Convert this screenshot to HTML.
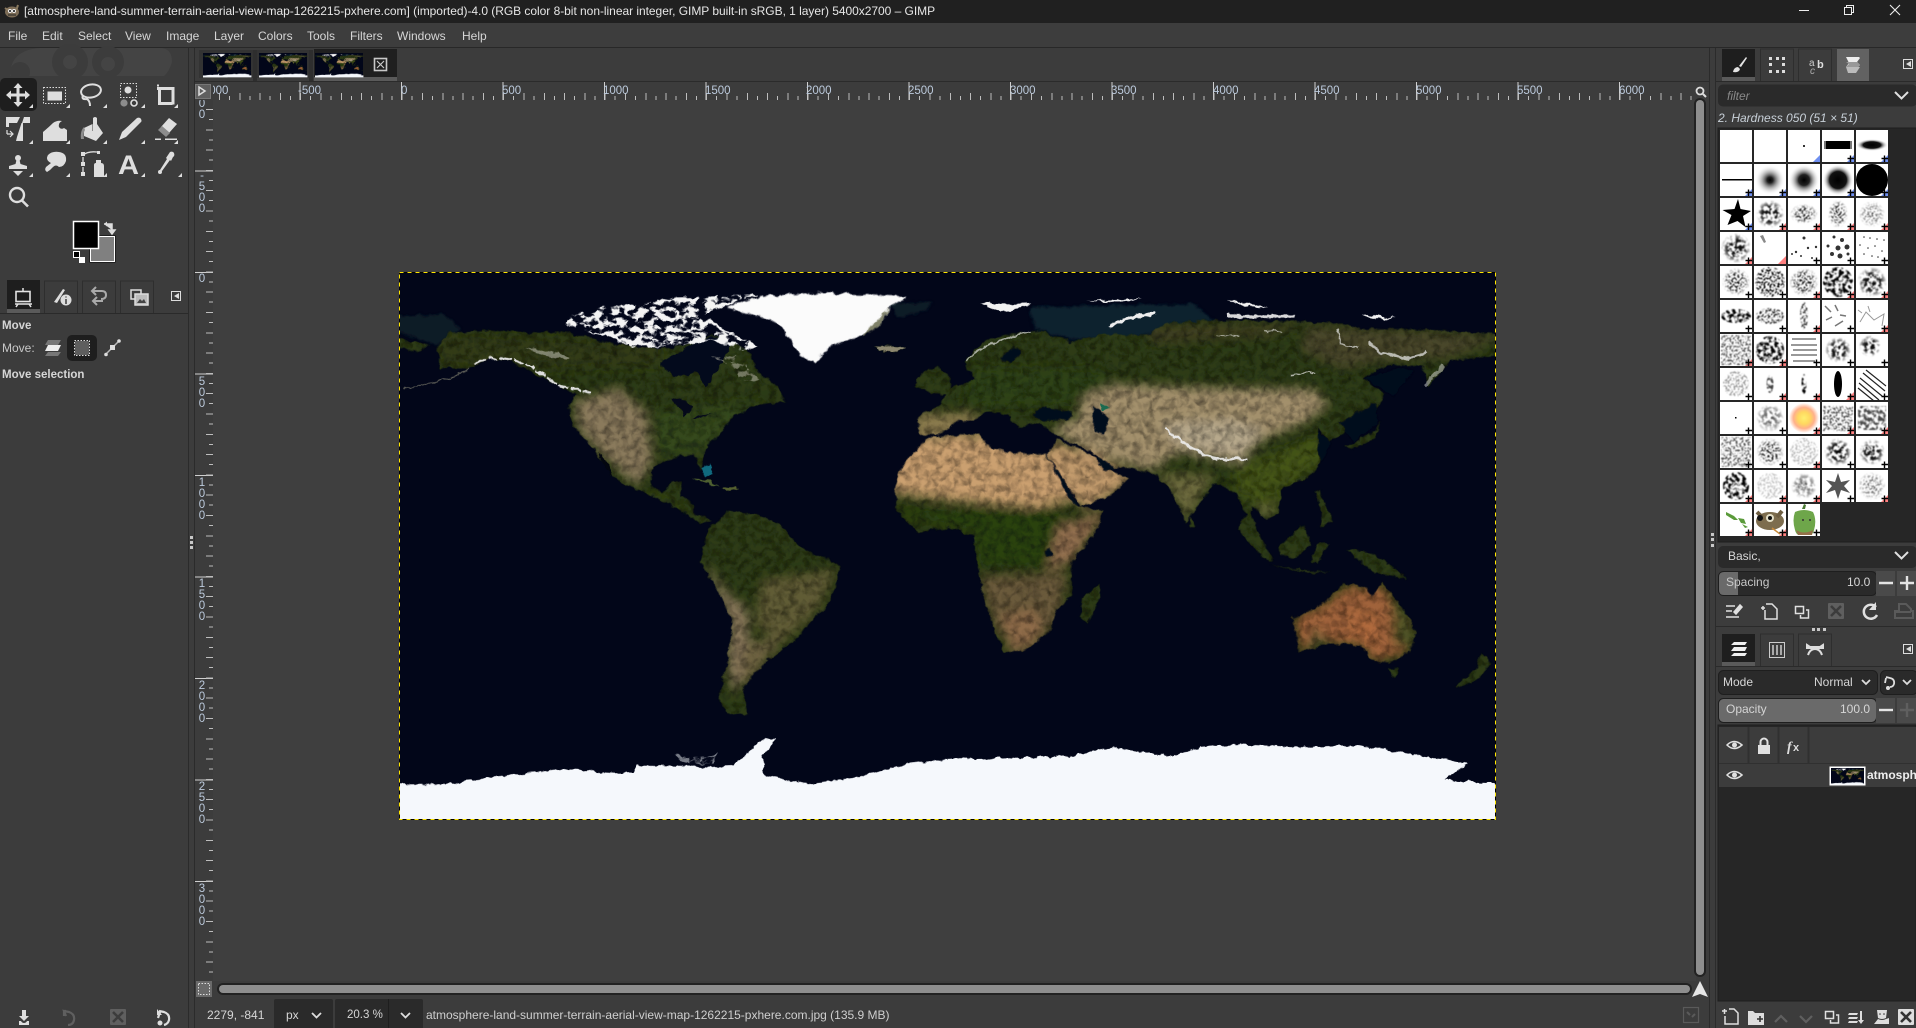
<!DOCTYPE html>
<html><head><meta charset="utf-8"><title>GIMP</title>
<style>
html,body{margin:0;padding:0;width:1916px;height:1028px;overflow:hidden;background:#3c3c3c;font-family:"Liberation Sans",sans-serif;font-size:12px;color:#d6d6d6}
.b{position:absolute}
.t{position:absolute;white-space:nowrap;line-height:16px}
.rh{position:absolute;top:84px;font-size:11.5px;line-height:14px;color:#bccadc;white-space:nowrap}
.rv{position:absolute;left:197px;width:10px;font-size:11.5px;line-height:11px;color:#bccadc;text-align:center;white-space:normal}
</style></head><body>
<!-- panels -->
<div class="b" style="left:0;top:0;width:1916px;height:23px;background:#202020"></div>
<div class="b" style="left:0;top:23px;width:1916px;height:24px;background:#3d3d3d"></div>
<div class="b" style="left:0;top:47px;width:1916px;height:1px;background:#282828"></div>
<div class="b" style="left:213px;top:100px;width:1483px;height:881px;background:#3f3f3f"></div>
<div class="b" style="left:188px;top:48px;width:1px;height:980px;background:#2b2b2b"></div>
<div class="b" style="left:194px;top:48px;width:1px;height:980px;background:#2b2b2b"></div>
<div class="b" style="left:1709px;top:48px;width:1px;height:980px;background:#2b2b2b"></div>
<div class="b" style="left:1715px;top:48px;width:1px;height:980px;background:#2b2b2b"></div>
<div class="b" style="left:195px;top:81px;width:1514px;height:1px;background:#2b2b2b"></div>
<!-- rulers ticks -->
<div class="b" style="left:213px;top:82px;width:1483px;height:18px;background:
repeating-linear-gradient(90deg,#cfcfcf 0 1px,transparent 1px 101.5px) 0 0/100% 18px no-repeat;background-position:-15px 0"></div>
<div class="b" style="left:213px;top:93px;width:1483px;height:7px;background:repeating-linear-gradient(90deg,transparent 0 6px,#bdbdbd 6px 7px,transparent 7px 20.3px)"></div>
<div class="b" style="left:213px;top:96px;width:1483px;height:4px;background:repeating-linear-gradient(90deg,transparent 0 16px,#bdbdbd 16px 17px,transparent 17px 20.3px)"></div>
<div class="b" style="left:195px;top:69px;width:18px;height:912px;clip-path:inset(31px 0 0 0);background:repeating-linear-gradient(180deg,#cfcfcf 0 1px,transparent 1px 101.5px)"></div>
<div class="b" style="left:206px;top:100px;width:7px;height:881px;background:repeating-linear-gradient(180deg,transparent 0 9px,#bdbdbd 9px 10px,transparent 10px 20.3px)"></div>
<div class="b" style="left:209px;top:100px;width:4px;height:881px;background:repeating-linear-gradient(180deg,transparent 0 19px,#bdbdbd 19px 20px,transparent 20px 20.3px)"></div>
<div class="b" style="left:195px;top:100px;width:18px;height:1px;background:#3c3c3c"></div>

<svg class="b" style="left:0;top:0" width="1916" height="1028" viewBox="0 0 1916 1028" xmlns="http://www.w3.org/2000/svg">
<defs>
<filter id="b1" x="-2%" y="-2%" width="104%" height="104%"><feGaussianBlur stdDeviation="1.400"/></filter>
<filter id="b14" x="-30%" y="-30%" width="160%" height="160%"><feGaussianBlur stdDeviation="14"/></filter>
<filter id="b5" x="-30%" y="-30%" width="160%" height="160%"><feGaussianBlur stdDeviation="4"/></filter>
<filter id="tex" x="0" y="0" width="100%" height="100%" color-interpolation-filters="sRGB"><feTurbulence type="fractalNoise" baseFrequency=".05" numOctaves="4" seed="5"/><feColorMatrix type="matrix" values="0 0 0 0 0 0 0 0 0 0 0 0 0 0 0 .9 0 0 0 -.33"/></filter>
<filter id="rough" x="-3%" y="-3%" width="106%" height="106%" color-interpolation-filters="sRGB"><feTurbulence type="fractalNoise" baseFrequency=".045" numOctaves="3" seed="2" result="t"/><feDisplacementMap in="SourceGraphic" in2="t" scale="16" xChannelSelector="R" yChannelSelector="G"/></filter>
<filter id="ice" x="-5%" y="-5%" width="110%" height="110%" color-interpolation-filters="sRGB"><feTurbulence type="fractalNoise" baseFrequency=".035 .06" numOctaves="3" seed="8" result="t"/><feColorMatrix in="t" type="matrix" values="0 0 0 0 0 0 0 0 0 0 0 0 0 0 0 9 0 0 0 -4.1" result="m"/><feComposite in="SourceGraphic" in2="m" operator="in"/></filter>
<filter id="n1" x="-20%" y="-20%" width="140%" height="140%" color-interpolation-filters="sRGB"><feTurbulence type="fractalNoise" baseFrequency=".28" numOctaves="2" seed="3" result="t"/><feColorMatrix in="t" type="matrix" values="0 0 0 0 0 0 0 0 0 0 0 0 0 0 0 5 0 0 0 -2.100" result="m"/><feComposite in="SourceGraphic" in2="m" operator="in"/><feGaussianBlur stdDeviation=".45"/></filter>
<filter id="n2" x="-20%" y="-20%" width="140%" height="140%" color-interpolation-filters="sRGB"><feTurbulence type="fractalNoise" baseFrequency=".5" numOctaves="2" seed="9" result="t"/><feColorMatrix in="t" type="matrix" values="0 0 0 0 0 0 0 0 0 0 0 0 0 0 0 7 0 0 0 -3.400" result="m"/><feComposite in="SourceGraphic" in2="m" operator="in"/><feGaussianBlur stdDeviation=".45"/></filter>
<radialGradient id="rg"><stop offset="0" stop-color="#000"/><stop offset=".55" stop-color="#000" stop-opacity=".9"/><stop offset="1" stop-color="#000" stop-opacity="0"/></radialGradient>
<radialGradient id="rl"><stop offset="0" stop-color="#000" stop-opacity=".75"/><stop offset=".7" stop-color="#000" stop-opacity=".4"/><stop offset="1" stop-color="#000" stop-opacity="0"/></radialGradient>
<radialGradient id="s1"><stop offset="0" stop-color="#000"/><stop offset=".2" stop-color="#222"/><stop offset="1" stop-color="#fff" stop-opacity="0"/></radialGradient>
<radialGradient id="s2"><stop offset="0" stop-color="#000"/><stop offset=".35" stop-color="#222"/><stop offset="1" stop-color="#fff" stop-opacity="0"/></radialGradient>
<radialGradient id="s3"><stop offset="0" stop-color="#000"/><stop offset=".55" stop-color="#111"/><stop offset="1" stop-color="#fff" stop-opacity="0"/></radialGradient>
<radialGradient id="sun"><stop offset="0" stop-color="#ffef70"/><stop offset=".4" stop-color="#ffd860"/><stop offset=".7" stop-color="#ffb08a"/><stop offset="1" stop-color="#fff"/></radialGradient>
<pattern id="wc" patternUnits="userSpaceOnUse" x="1720" y="130" width="34" height="34"><rect width="32" height="32" fill="#fff"/></pattern>
<pattern id="pc" patternUnits="userSpaceOnUse" x="1720" y="130" width="34" height="34"><path d="M25.500 28.500h6.500M28.500 25.500v6.500" stroke="#000" stroke-width="1.400"/></pattern>
<clipPath id="mapclip"><rect x="400" y="272" width="1096" height="548"/></clipPath>
<clipPath id="land">
<path d="M130 240L165 200L300 193L400 200L490 198L600 225L760 245L830 235L900 205L1000 250L1040 320L1085 345L1110 390L1040 395L960 430L930 470L880 520L870 580L852 535L800 540L735 570L730 620L760 640L795 608L820 610L812 650L850 672L850 700L905 715L870 725L800 680L740 650L665 620L620 590L570 520L510 450L500 400L520 370L420 320L330 275L280 270L220 300L140 295L140 265Z"/>
<path d="M0 212L110 235L80 250L0 235Z"/>
<path d="M890 740L950 690L1030 700L1100 735L1150 790L1262 840L1250 890L1225 950L1170 1000L1140 1040L1070 1090L1020 1135L990 1180L1000 1250L950 1250L920 1210L940 1120L960 1000L930 930L870 830L880 780Z"/>
<path d="M1470 345L1490 310L1530 290L1568 320L1568 370L1520 365L1490 355Z"/>
<path d="M1355 235L1445 240L1420 252L1370 248Z"/>
<path transform="translate(1568 0)" d="M-153 610L-130 560L-65 490L0 482L85 480L100 510L160 530L268 535L300 580L360 680L430 690L400 760L340 830L342 920L300 960L280 1020L205 1075L150 1075L115 990L93 925L70 800L70 760L0 735L-90 748L-150 690Z"/>
<path transform="translate(1568 0)" d="M272 535L300 490L400 540L440 575L500 600L460 640L370 680L320 610Z"/>
<path transform="translate(1568 0)" d="M40 280L90 225L150 205L250 195L340 225L420 205L560 205L600 175L740 165L960 170L1100 175L1150 190L1300 190L1560 205L1560 260L1400 275L1340 350L1322 290L1220 290L1160 325L1215 370L1190 420L1110 470L1060 500L1030 460L1040 560L1000 600L930 630L920 700L885 712L850 680L840 700L905 830L880 820L805 740L830 700L800 640L745 612L690 680L660 720L610 620L570 590L500 570L440 570L400 530L300 482L250 450L190 462L160 425L100 415L75 440L30 440L-30 480L-88 478L-88 428L-30 400L0 350L70 330Z"/>
<path transform="translate(1568 0)" d="M672 705L690 735L672 735Z"/>
<path transform="translate(1568 0)" d="M1105 515L1190 470L1205 440L1190 490L1125 520Z"/>
<path transform="translate(1568 0)" d="M920 790L990 730L1010 780L970 820L925 815Z"/>
<path transform="translate(1568 0)" d="M895 838L1000 855L1070 860L1000 860Z"/>
<path transform="translate(1568 0)" d="M1010 830L1030 780L1060 780L1030 830Z"/>
<path transform="translate(1568 0)" d="M1110 795L1180 805L1250 850L1280 875L1190 860L1150 830Z"/>
<path transform="translate(1568 0)" d="M1020 640L1035 635L1070 720L1040 735L1040 680Z"/>
<path transform="translate(1568 0)" d="M958 985L1040 950L1100 890L1160 900L1185 925L1210 885L1270 960L1303 1020L1290 1075L1230 1110L1180 1100L1150 1060L1060 1055L980 1078Z"/>
<path transform="translate(1568 0)" d="M1230 1125L1260 1125L1245 1150Z"/>
<path transform="translate(1568 0)" d="M1415 1170L1470 1130L1490 1080L1515 1110L1480 1150L1440 1175Z"/>
<path transform="translate(1568 0)" d="M365 980L370 930L420 890L415 940L385 1000Z"/>
</clipPath>
<g id="wm">
<g clip-path="url(#mapclip)">
<rect x="400" y="272" width="1096" height="548" fill="#020619"/>
<g transform="translate(390,260) scale(.35714 .36364)">
<g filter="url(#rough)">
<path d="M1400 120L1520 115L1500 140L1420 160ZM0 155L150 150L200 190L130 235L0 190Z" fill="#0a1a28" filter="url(#b5)"/>
<g transform="translate(1568 0)" fill="#07202e" filter="url(#b5)"><path d="M220 130L680 120L740 165L560 205L340 220L240 190Z"/></g>
<g filter="url(#b1)"><g clip-path="url(#land)">
<rect x="0" y="150" width="3140" height="1110" fill="#2d3b15"/>
<g filter="url(#b14)">
<path d="M515 390L640 350L720 420L735 560L690 620L600 540L530 470Z" fill="#8a7a5c"/>
<path d="M130 200L760 230L760 290L400 300L140 290Z" fill="#333a15"/>
<path d="M740 420L1050 390L950 450L870 530L760 540Z" fill="#364a1c"/>
<path d="M660 600L730 640L840 700L780 680Z" fill="#3e4e1c"/>
<path d="M1040 880L1250 850L1200 960L1090 1060L1020 1000Z" fill="#615c36"/>
<path d="M880 830L950 920L1000 960L1010 1100L960 1200L945 1100L955 1000Z" fill="#8a785c"/>
<path d="M1010 1050L1100 1040L1040 1120L990 1180L980 1100Z" fill="#6d6240"/>
<g transform="translate(1568 0)">
<path d="M-170 480L100 480L300 530L360 660L240 680L100 670L0 660L-170 640Z" fill="#cba070"/>
<path d="M-170 690L60 690L300 680L320 730L260 840L90 840L60 740Z" fill="#2b4210"/>
<path d="M80 870L330 860L300 1000L200 1090L120 1000Z" fill="#6a5a3a"/>
<path d="M300 730L440 690L340 830L270 860Z" fill="#936f50"/>
<path d="M140 980L240 960L260 1040L170 1080Z" fill="#8f6c48"/>
<path d="M272 500L400 530L520 600L380 690L320 610Z" fill="#c19a6c"/>
<path d="M-100 420L60 420L100 440L-30 500L-100 490Z" fill="#8a7a4e"/>
<path d="M380 340L700 350L1020 355L1060 400L990 450L880 490L810 560L640 530L560 580L420 540L280 470L360 430Z" fill="#a3906c"/>
<path d="M590 450L800 440L880 470L810 545L640 510Z" fill="#b7a98c"/>
<path d="M570 590L740 590L660 720L610 620Z" fill="#6d6a3d"/>
<path d="M800 570L1040 480L1040 560L930 630L910 700L800 640Z" fill="#445419"/>
<path d="M1000 180L1560 210L1400 270L1200 280L1100 300L980 250Z" fill="#49472a"/>
<path d="M550 180L1000 175L900 210L560 230Z" fill="#3f3f20"/>
<path d="M60 300L400 300L480 340L300 400L40 400Z" fill="#2f4217"/>
<path d="M850 680L920 670L885 710Z" fill="#6b6a3c"/>
<path d="M960 985L1040 950L1110 900L1210 900L1300 1000L1290 1075L1190 1105L1150 1060L1060 1050L985 1075Z" fill="#a0643a"/>
<path d="M1130 960L1200 990L1190 1060L1120 1040Z" fill="#b06a3c"/>
<path d="M1210 885L1270 960L1303 1020L1290 1075L1240 1050L1240 960Z" fill="#4f5227"/>
<path d="M1020 1010L1000 1070L1060 1050Z" fill="#5a5830"/>
</g>
</g>
<rect x="0" y="150" width="3140" height="1110" filter="url(#tex)"/>
</g></g>
<!-- dark water details -->
<path d="M755 285L830 240L900 208L960 230L930 280L885 350L860 310L790 318Z" fill="#030a1c"/>
<path d="M785 385L815 380L850 405L825 432L815 410ZM850 435L905 420L860 440Z" fill="#05091a"/>
<path d="M582 525L600 545L625 595L600 570Z" fill="#03060f"/>
<path d="M870 570l25 -10 10 30 -20 5z" fill="#10697e"/><path d="M845 600l50 5 30 20 -40 -12z" fill="#4e6030"/><path d="M930 630l40 -5 10 8 -40 6z" fill="#55602f"/>
<!-- arctic canada -->
<path d="M490 175L510 150L600 130L660 125L750 110L800 100L1030 97L960 120L880 150L930 185L1030 235L990 250L900 220L800 240L680 240L600 210L560 200Z" fill="#f4f4f4" filter="url(#ice)"/>
<path d="M240 285Q300 250 400 295L470 345L560 365" fill="none" stroke="#ddd" stroke-width="6" stroke-dasharray="30 6"/>
<path d="M40 352Q130 345 220 300" fill="none" stroke="#6a6a60" stroke-width="2.500"/>
<path d="M380 240l110 20 10 15 -60 -10z" fill="#b8b8aa" opacity=".6"/>
<path d="M900 265l80 0 30 40 30 30 -60 -5 -10 -30z" fill="#b7b5a6" opacity=".55" filter="url(#ice)"/>
<path d="M1355 235L1445 240L1420 252L1370 248Z" fill="#8d8770"/>
<path d="M940 130L1040 100L1200 90L1340 95L1450 103L1400 130L1370 180L1310 210L1230 240L1190 283L1150 265L1120 215L1080 170L1000 145Z" fill="#fbfbfb" filter="url(#b1)"/>
<path d="M1340 190L1400 130L1370 185L1320 210Z" fill="#7f8168" filter="url(#b1)"/>
<path d="M0 1442L160 1442L300 1420L490 1400L630 1410L680 1410L690 1390L860 1395L960 1390L1040 1320L1085 1315L1045 1360L1045 1415L1170 1440L1300 1425L1450 1385L1590 1370L1590 1570L0 1570Z" fill="#f5f8fc"/>
<path d="M790 1358l80 10 50 -10 -20 30 -80 -5z" fill="#c8ccd0" opacity=".6" filter="url(#ice)"/>
<g transform="translate(1568 0)">
<path d="M-10 1372L120 1370L330 1365L450 1340L620 1365L700 1340L810 1332L1000 1340L1140 1335L1300 1360L1450 1385L1385 1430L1560 1442L1560 1570L-10 1570Z" fill="#f5f8fc"/>
<g fill="#f2f2f2">
<path d="M85 120L225 118L160 145L120 135Z"/><path d="M380 112l160 -5 -70 10z"/>
<path d="M770 110l50 5 40 10 30 8 -50 -5z"/>
<path d="M1150 150l100 8 -60 5z"/>
</g>
<g fill="none" stroke="#eee">
<path d="M445 185Q490 155 578 147" stroke-width="10"/>
<path d="M775 155L965 155" stroke-width="9" opacity=".9"/>
<path d="M45 280Q90 225 225 197" stroke-width="5" opacity=".65"/>
<path d="M1085 190l8 40l50 12" stroke-width="3.500" opacity=".7"/>
<path d="M1175 222l30 33l80 15l50 -15" stroke-width="8" opacity=".7"/>
<path d="M1330 345l52 -55" stroke-width="10" opacity=".45"/>
<path d="M950 318l70 -10" stroke-width="4" opacity=".7"/>
<path d="M605 462Q650 510 740 548L830 545" stroke-width="7" opacity=".9"/>
<path d="M750 205l60 5M880 195l50 2" stroke-width="3" opacity=".6"/>
</g>
<g fill="#03071a" filter="url(#b1)">
<path d="M232 425l30 -22 80 15 -10 22 -70 2z"/>
<path d="M400 405l20 5 25 30 -10 40 -30 -5 -5 -40z"/>
<path d="M140 270l40 -30 20 10 -25 35z"/>
<path d="M405 540l30 10 30 25 -35 5z"/>
<path d="M280 550l25 35 60 95 -15 -5 -35 -50z"/>
<path d="M1030 470l40 30 -30 60 -10 -30z"/>
<path d="M1090 450l100 -60 10 60 -70 50z"/>
<path d="M1160 325l100 -30 40 10 -60 70 -30 -20z"/>
<path d="M262 800l18 -5 5 15 -15 5z"/>
</g>
<path d="M420 395l25 10 -20 8z" fill="#1a6a50"/>
</g>
</g>
</g>
</g>
</g>
</defs>

<use href="#wm"/>
<rect x="399.500" y="272.500" width="1096" height="547" fill="none" stroke="#000"/>
<rect x="399.500" y="272.500" width="1096" height="547" fill="none" stroke="#ffe600" stroke-dasharray="4 4"/>

<!-- image tabs -->
<rect x="195" y="48" width="119" height="33" fill="#3c3c3c"/>
<path d="M199 50h55v28h-55zM255 50h55v28h-55z" fill="#333"/>
<rect x="314" y="49" width="83" height="28" fill="#1f1f1f"/><rect x="314" y="77" width="83" height="4" fill="#5a5a5a"/>
<rect x="253" y="50" width="4" height="31" fill="#2e2e2e"/><rect x="309" y="50" width="4" height="31" fill="#2e2e2e"/>
<g transform="translate(203 53)"><g transform="scale(.0438) translate(-400 -272)"><use href="#wm"/></g></g>
<g transform="translate(259 53)"><g transform="scale(.0438) translate(-400 -272)"><use href="#wm"/></g></g>
<g transform="translate(315 53)"><g transform="scale(.0438) translate(-400 -272)"><use href="#wm"/></g></g>
<rect x="374.500" y="58.500" width="12" height="12" fill="none" stroke="#c8c8c8" stroke-width="1.600"/><path d="M377 61l7 7M384 61l-7 7" stroke="#c8c8c8" stroke-width="1.200"/>
<!-- titlebar icons -->
<g transform="translate(3 3)"><ellipse cx="9" cy="9" rx="7" ry="5.500" fill="#7d6d57"/><path d="M2 5l4 3M15 2l-2 6" stroke="#8a7a60" stroke-width="2"/><circle cx="7" cy="8" r="2" fill="#eee"/><circle cx="11" cy="8" r="2" fill="#eee"/><circle cx="7" cy="8" r="1" fill="#111"/><circle cx="11" cy="8" r="1" fill="#111"/><path d="M5 12h8" stroke="#222"/></g>
<path d="M1799 10.500h10" stroke="#eee" stroke-width="1"/>
<path d="M1844.500 7.500h7v7h-7zM1846.500 7.500v-2h7v7h-2" fill="none" stroke="#eee"/>
<path d="M1890 5l10 10M1900 5l-10 10" stroke="#eee" stroke-width="1.100"/>

<!-- toolbox watermark -->
<g fill="#444"><path d="M10 76q0 -26 30 -28h120q12 0 12 14q-3 10 -8 14z"/></g>
<g fill="#3c3c3c"><circle cx="70" cy="62" r="18"/><circle cx="108" cy="62" r="16"/><circle cx="20" cy="72" r="10"/></g>
<g fill="#444"><circle cx="70" cy="62" r="7"/><circle cx="108" cy="64" r="7"/></g>
<rect x="0" y="76" width="188" height="6" fill="#3c3c3c"/>

<!-- toolbox -->
<rect x="0" y="78" width="37" height="33" rx="5" fill="#1e1e1e"/>
<g fill="#dedede" stroke="none">
<!-- move -->
<path d="M18 83l4.500 5h-3v5.500h5.500v-3l5 4.500 -5 4.500v-3h-5.500v5.500h3l-4.500 5 -4.500 -5h3v-5.500h-5.500v3l-5 -4.500 5 -4.500v3h5.500v-5.500h-3z"/>
<!-- rect select -->
<rect x="47.500" y="91.500" width="14.500" height="9"/>
<!-- fuzzy -->
<circle cx="128" cy="90" r="3.500"/><circle cx="124" cy="103" r="3.600" fill="#8c8c8c"/>
<!-- unified transform -->
<path d="M6 117h14l-3 6h-11zM24 117h6v6h-8zM21.500 123h1.500v18h-7l1 -4z"/>
<path d="M6 123h3v4h-3z"/>
<!-- warp -->
<path d="M43 141v-9q6 -5 10 -9q4 -3 9 -2q-4 2 -3 6q2 3 5 1l3 2v11z"/>
<!-- bucket -->
<path d="M84 128L92.500 124v7h4.500v-7L103 133L96 141L84 136z"/>
<path d="M93 118q2 -2 4 0v13h-4z"/>
<path d="M84 127q-4 4 -3 12h3q-1 -6 1 -9z" fill="#8c8c8c"/>
<!-- pencil -->
<path d="M119 140l3 -8 15 -14q3 -1 4 1q1 2 0 3l-15 15z"/>
<!-- eraser -->
<path d="M161 127l8 -9 8 6 -8 9z"/><path d="M158 130l4 -4 8 7 -4 4z" fill="#8c8c8c"/><rect x="155" y="138.500" width="6" height="1.500"/><rect x="165" y="138.500" width="12" height="1.500"/>
<!-- stamp -->
<circle cx="18" cy="158" r="3"/><path d="M16.500 160h3l1 4 6.500 2v3h-18v-3l6.500 -2zM13 171h10l-5 5z"/>
<!-- smudge -->
<path d="M47 172q-3 -2 -1 -5l5 -4q-6 -3 -3 -8q4 -4 11 -3q8 1 7 9q-2 6 -7 6q-3 -3 -6 0l-3 3z"/>
<!-- path -->
<rect x="81" y="152" width="4" height="4"/><rect x="81" y="162" width="4" height="4"/><rect x="81" y="172" width="4" height="4"/><rect x="97" y="151" width="3" height="3"/>
<path d="M94 174v-9q0 -2 2 -2v-3h5v3q3 0 3 3v11h-10z"/>
<!-- picker -->
<path d="M170 152q3 -1 4 1q1 3 -1 4l-2 4 -1 -1 -8 11 -2 -1 7 -11 -1 -1z"/>
<circle cx="160" cy="172" r="2"/>
</g>
<rect x="43.500" y="87.500" width="22" height="16" fill="none" stroke="#dedede" stroke-dasharray="1.500 1.500"/>
<ellipse cx="91" cy="91" rx="10" ry="6.500" transform="rotate(-10 91 91)" fill="none" stroke="#dedede" stroke-width="2"/>
<path d="M83 95q-2 5 4 4q3 2 3 7" fill="none" stroke="#dedede" stroke-width="2"/>
<rect x="120.500" y="83.500" width="16" height="14" fill="none" stroke="#dedede" stroke-dasharray="1.500 1.500"/>
<circle cx="134" cy="103" r="3" fill="none" stroke="#dedede" stroke-width="1.600"/>
<path d="M157 85.500h2" stroke="#dedede" stroke-width="2"/><path d="M157 88.500h16v16" fill="none" stroke="#dedede" stroke-width="3"/><path d="M159.500 90v13.500h13" fill="none" stroke="#dedede" stroke-width="3"/>
<path d="M7 134h6M10 131l3 3 -3 3M7 130v4" fill="none" stroke="#dedede" stroke-width="1.200"/>
<path d="M83 155q5 -4 14 -3M83 157v5M83 167v5" fill="none" stroke="#dedede" stroke-width="1.300"/>
<text x="118" y="174" font-family="Liberation Sans" font-weight="700" font-size="27" fill="#dedede" textLength="21" lengthAdjust="spacingAndGlyphs">A</text>
<circle cx="17" cy="195" r="7" fill="none" stroke="#dedede" stroke-width="2.400"/><path d="M22 200.500l6 6" stroke="#dedede" stroke-width="2.600"/>
<path fill="#dedede" d="M33 104v4h-4zM70 104v4h-4zM107 104v4h-4zM145 104v4h-4zM178 104v4h-4zM33 140v4h-4zM70 140v4h-4zM107 140v4h-4zM145 140v4h-4zM178 140v4h-4zM33 173v4h-4zM70 173v4h-4zM107 173v4h-4zM145 173v4h-4zM182 173v4h-4z"/>
<!-- colors -->
<rect x="90" y="236" width="25" height="26" fill="#808080" stroke="#000" stroke-width="1"/><rect x="90.500" y="236.500" width="24" height="25" fill="#808080" stroke="#fff"/>
<rect x="73.500" y="221.500" width="25" height="27" fill="#000" stroke="#fff" stroke-width="1.500"/>
<path d="M104 224h8v6M109 230l3 4 3 -4z" stroke="#ddd" fill="#ddd" stroke-width="1.500"/><path d="M104 224l3 -2.500v5z" fill="#ddd"/>
<rect x="73.500" y="251.500" width="6" height="6" fill="#000" stroke="#fff"/><rect x="79" y="257" width="6" height="6" fill="#fff"/>

<!-- left tabs -->
<path d="M44.500 313V281h33v32M82.500 313V281h33v32M120.500 313V281h33v32" fill="none" stroke="#2e2e2e"/>
<rect x="7" y="280" width="33" height="29" fill="#1e1e1e"/><rect x="7" y="309" width="33" height="4" fill="#5a5a5a"/>
<rect x="0" y="313" width="188" height="1" fill="#2a2a2a"/>
<rect x="16" y="291.500" width="14" height="10" fill="none" stroke="#e4e4e4" stroke-width="1.600"/><path d="M23 288v3M15 304h17M18 304l-2 3M29 304l2 3" stroke="#e4e4e4" stroke-width="1.500"/>
<path d="M54 302l9 -13 2 1 -8 13z" fill="#ddd"/><circle cx="66" cy="300" r="5.500" fill="#ddd"/><path d="M66 296.500v1M66 299v5" stroke="#3c3c3c" stroke-width="1.500"/>
<path d="M96 287l-4 4 4 4M92 291h10q4 0 4 4q0 4 -5 4M97 297l-4 4 4 4M93 301h10" fill="none" stroke="#aaa" stroke-width="2"/>
<rect x="131" y="290" width="10" height="9" fill="none" stroke="#ddd" stroke-width="1.500"/><rect x="135" y="294" width="13" height="11" fill="#bbb" stroke="#ddd" stroke-width="1.500"/><path d="M137 303l3 -4 2 2 2 -2 2 4z" fill="#444"/>
<rect x="171.500" y="291.500" width="9" height="9" fill="none" stroke="#ddd"/><path d="M179 293v6l-5 -3z" fill="#ddd"/>
<!-- move opts -->
<path d="M48 340h13l-3 5h-13z" fill="#777"/><path d="M48 345h13l-3 6h-13z" fill="#eee"/><path d="M48 352h13l-3 4h-13z" fill="#777"/>
<rect x="67" y="335" width="30" height="26" rx="5" fill="#1e1e1e"/><rect x="75" y="341" width="14" height="14" fill="#5e5e5e"/><rect x="74.500" y="340.500" width="15" height="15" fill="none" stroke="#ddd" stroke-dasharray="1.500 1.500"/>
<path d="M106 354l13 -13" stroke="#bbb" stroke-width="1.500"/><circle cx="106" cy="354.500" r="1.800" fill="#ddd"/><circle cx="119" cy="341" r="1.800" fill="#ddd"/><rect x="110" y="345" width="5" height="5" fill="#ddd"/>

<!-- bottom left -->
<g fill="#dedede"><path d="M22 1010h4v6h3l-5 5 -5 -5h3z"/><path d="M19 1021h2q1 2 3 2q2 0 3 -2h2v4h-10z"/></g>
<path d="M66 1011h-2v5M66 1016l-2 -5 5 1q6 2 5 8q-1 5 -6 5" fill="none" stroke="#5f5f5f" stroke-width="2.200"/>
<rect x="110" y="1009" width="16" height="16" rx="1" fill="#5f5f5f"/><path d="M113 1012l10 10M123 1012l-10 10" stroke="#3c3c3c" stroke-width="2.500"/>
<path d="M160 1012l-2 6M159 1011l5 1q6 2 5 8q-1 4 -5 5" fill="none" stroke="#dedede" stroke-width="2.200"/><circle cx="160" cy="1023" r="2.500" fill="#dedede"/><path d="M157 1009v6h5z" fill="#dedede"/>
<!-- corner + scrollbars -->
<rect x="196" y="981" width="16" height="16" fill="#6a6a6a"/><rect x="198.500" y="983.500" width="11" height="11" fill="none" stroke="#ddd" stroke-dasharray="1.500 1.500"/>
<rect x="195.500" y="84.500" width="15" height="14" fill="#5f5f5f" stroke="#777"/><path d="M199 87v8l6 -4z" fill="none" stroke="#ddd" stroke-width="1.500"/>
<rect x="217" y="983" width="1475" height="12" rx="6" fill="#222"/><rect x="219" y="985" width="1471" height="8" rx="4" fill="#8e8e8e"/>
<rect x="1694" y="98" width="12" height="879" rx="6" fill="#222"/><rect x="1696" y="100" width="8" height="875" rx="4" fill="#8e8e8e"/>
<path d="M1692 997l8 -16 8 16 -8 -3z" fill="#e6e6e6"/>
<circle cx="1700" cy="91" r="3.500" fill="none" stroke="#ddd" stroke-width="1.800"/><path d="M1703 94l3 3" stroke="#ddd" stroke-width="2"/>
<rect x="1683.500" y="1007.500" width="15" height="15" fill="none" stroke="#5a5a5a" stroke-width="1.200"/><path d="M1687 1012l3 3M1692 1017l3 -3" stroke="#5a5a5a" stroke-width="2"/>
<!-- combos status -->
<path d="M274 1028v-27q0 -2 2 -2h55q2 0 2 2v27zM335 1028v-27q0 -2 2 -2h84q2 0 2 2v27z" fill="#2a2a2a"/>
<rect x="388" y="999" width="1" height="29" fill="#1e1e1e"/>
<path d="M312 1013l4.500 4.500 4.500 -4.500M401 1013l4.500 4.500 4.500 -4.500" fill="none" stroke="#ddd" stroke-width="1.800"/>

<!-- RIGHT DOCK -->
<path d="M1760.500 81V49h33v32M1798.500 81V49h33v32" fill="none" stroke="#2e2e2e"/>
<rect x="1722" y="49" width="33" height="28" fill="#1e1e1e"/><rect x="1722" y="77" width="33" height="4" fill="#5a5a5a"/>
<rect x="1837" y="49" width="32" height="32" fill="#626262"/>
<rect x="1716" y="81" width="200" height="1" fill="#2a2a2a"/>
<path d="M1733 72q1 -5 5 -5l2 2q-1 4 -7 3zM1739 66l7 -9 1 1 -6 9z" fill="#e4e4e4"/>
<g fill="#ddd"><rect x="1769" y="57" width="3" height="3"/><rect x="1776" y="57" width="3" height="3"/><rect x="1782" y="57" width="3" height="3"/><rect x="1769" y="63" width="3" height="3"/><rect x="1782" y="63" width="3" height="3"/><rect x="1769" y="70" width="3" height="3"/><rect x="1776" y="70" width="3" height="3"/><rect x="1782" y="70" width="3" height="3"/></g>
<text x="1809" y="66" font-size="10" fill="#ccc" font-family="Liberation Sans">a</text><text x="1817" y="68" font-size="11" font-weight="700" fill="#ddd" font-family="Liberation Sans">b</text><text x="1810" y="74" font-size="10" font-style="italic" fill="#aaa" font-family="Liberation Sans">c</text>
<path d="M1846 57h13l1 1 -3 4 3 3 -2 2h-12l3 -4z" fill="#eee"/><path d="M1846 67h14l-4 6h-8z" fill="#bbb"/><path d="M1846 62h11l3 3 -2 2h-12l3 -3z" fill="#999"/>
<rect x="1903.500" y="59.500" width="9" height="9" fill="none" stroke="#ddd"/><path d="M1911 61v6l-5 -3z" fill="#ddd"/>
<rect x="1718" y="84.500" width="199" height="22" rx="5" fill="#2a2a2a"/>
<path d="M1895 92l6.500 6.500 6.500 -6.500" fill="none" stroke="#e0e0e0" stroke-width="2"/>
<rect x="1718" y="128" width="198" height="414" fill="#262626" stroke="#1e1e1e"/>
<rect x="1720" y="130" width="170" height="374" fill="url(#wc)"/>
<rect x="1720" y="504" width="102" height="34" fill="url(#wc)"/>
<g>
<path fill="#6f8ff0" d="M1820 162h-7l7-7zM1854 162h-7l7-7zM1888 162h-7l7-7zM1752 196h-7l7-7zM1786 196h-7l7-7zM1820 196h-7l7-7zM1854 196h-7l7-7zM1888 196h-7l7-7zM1752 230h-7l7-7z"/>
<path fill="#ff8080" d="M1786 230h-7l7-7zM1820 230h-7l7-7zM1854 230h-7l7-7zM1888 230h-7l7-7zM1752 264h-7l7-7zM1820 298h-7l7-7zM1854 298h-7l7-7zM1888 298h-7l7-7zM1820 332h-7l7-7zM1888 332h-7l7-7zM1752 366h-7l7-7zM1786 366h-7l7-7zM1786 400h-7l7-7zM1820 400h-7l7-7zM1854 400h-8l8-8zM1820 434h-7l7-7zM1854 434h-7l7-7zM1888 434h-7l7-7zM1820 468h-7l7-7zM1752 502h-7l7-7zM1786 502h-7l7-7zM1820 502h-7l7-7zM1888 502h-7l7-7zM1752 536h-7l7-7zM1786 536h-7l7-7z"/>
<!-- r0 -->
<rect x="1803" y="145" width="2" height="2" fill="#333"/>
<rect x="1824" y="141" width="28" height="8" fill="#000"/><rect x="1824" y="141" width="2" height="8" fill="#777"/><rect x="1850" y="141" width="2" height="8" fill="#777"/>
<ellipse cx="1872" cy="145" rx="16" ry="6" fill="url(#s3)"/>
<!-- r1 -->
<rect x="1722" y="179" width="30" height="1.500" fill="#000"/>
<circle cx="1770" cy="180" r="15" fill="url(#s1)"/><circle cx="1804" cy="180" r="15.500" fill="url(#s2)"/><circle cx="1838" cy="180" r="15.500" fill="url(#s3)"/><circle cx="1872" cy="180" r="16" fill="#000"/>
<!-- r2 -->
<path d="M1738 199l2.500 10 10.500 2 -8 5 2.500 11 -8 -6 -10 4 4 -10 -9 -5 12 -1z" fill="#000"/>
<circle cx="1770" cy="214" r="14" fill="url(#rg)" filter="url(#n1)"/>
<ellipse cx="1804" cy="214" rx="14" ry="10" fill="url(#rg)" filter="url(#n2)"/>
<ellipse cx="1838" cy="214" rx="10" ry="14" fill="url(#rg)" filter="url(#n2)"/>
<circle cx="1872" cy="214" r="13" fill="url(#rl)" filter="url(#n2)"/>
<!-- r3 -->
<circle cx="1736" cy="248" r="15" fill="url(#rg)" filter="url(#n1)"/>
<path d="M1760 236l3 -1 3 7 -2 1z" fill="#888"/>
<g fill="#333"><circle cx="1804" cy="238" r="1.500"/><circle cx="1796" cy="252" r="1.200"/><circle cx="1808" cy="248" r="1.200"/><circle cx="1816" cy="247" r="1.200"/><circle cx="1801" cy="256" r="1"/><circle cx="1812" cy="258" r="1"/><circle cx="1792" cy="254" r="1"/>
<circle cx="1834" cy="237" r="1.500"/><circle cx="1842" cy="240" r="2"/><circle cx="1828" cy="246" r="1.500"/><circle cx="1838" cy="248" r="2.500"/><circle cx="1847" cy="247" r="2.500"/><circle cx="1832" cy="254" r="2"/><circle cx="1840" cy="256" r="2.500"/><circle cx="1848" cy="254" r="1.500"/>
<circle cx="1864" cy="237" r=".8"/><circle cx="1870" cy="238" r=".8"/><circle cx="1877" cy="239" r=".8"/><circle cx="1884" cy="240" r=".8"/><circle cx="1860" cy="245" r=".8"/><circle cx="1868" cy="248" r=".8"/><circle cx="1875" cy="246" r=".8"/><circle cx="1882" cy="251" r=".8"/><circle cx="1864" cy="254" r=".8"/><circle cx="1872" cy="256" r=".8"/><circle cx="1878" cy="257" r=".8"/></g>
<!-- r4 -->
<circle cx="1736" cy="282" r="14" fill="url(#rg)" filter="url(#n2)"/>
<circle cx="1770" cy="282" r="15" fill="#000" filter="url(#n2)"/>
<circle cx="1804" cy="282" r="14.500" fill="url(#rg)" filter="url(#n2)"/>
<circle cx="1838" cy="282" r="15" fill="#000" filter="url(#n1)"/>
<circle cx="1872" cy="282" r="15" fill="url(#rg)" filter="url(#n1)"/>
<!-- r5 -->
<ellipse cx="1736" cy="316" rx="15" ry="7" fill="#000" filter="url(#n1)"/>
<ellipse cx="1770" cy="316" rx="14" ry="8" fill="#222" filter="url(#n2)"/>
<ellipse cx="1804" cy="316" rx="4" ry="14" fill="#333" filter="url(#n2)"/>
<path d="M1825 306l6 6M1835 305l3 6M1826 320l6 -3M1840 315l6 1M1835 326l8 -5" stroke="#777" stroke-width="1.500"/>
<path d="M1860 322l6 -10 8 8 10 -6 -2 12M1858 310l4 3M1868 306l2 6" stroke="#999" fill="none"/>
<!-- r6 -->
<rect x="1721" y="335" width="30" height="30" fill="#555" filter="url(#n2)"/>
<circle cx="1770" cy="350" r="14" fill="#000" filter="url(#n1)"/>
<path d="M1792 339h24M1791 345h26M1793 350h24M1791 355h26M1793 361h22" stroke="#333" stroke-width="1"/>
<circle cx="1838" cy="350" r="13" fill="url(#rg)" filter="url(#n1)"/>
<circle cx="1870" cy="346" r="11" fill="url(#rg)" filter="url(#n1)"/>
<!-- r7 -->
<circle cx="1736" cy="384" r="13" fill="#999" filter="url(#n2)"/>
<ellipse cx="1770" cy="384" rx="3.500" ry="9" fill="#444" filter="url(#n1)"/>
<ellipse cx="1804" cy="384" rx="2.500" ry="10" fill="#000" filter="url(#n1)"/>
<ellipse cx="1838" cy="384" rx="4" ry="13" fill="#000"/>
<path d="M1860 378l22 18M1863 373l22 18M1859 383l20 17M1866 370l20 16M1858 388l16 13" stroke="#222" stroke-width="1.200"/>
<!-- r8 -->
<rect x="1735" y="417" width="1.500" height="1.500" fill="#000"/>
<circle cx="1770" cy="418" r="14" fill="url(#rl)" filter="url(#n1)"/>
<circle cx="1804" cy="418" r="15" fill="url(#sun)"/>
<rect x="1823" y="406" width="30" height="25" fill="#000" filter="url(#n2)" opacity=".7"/>
<rect x="1858" y="406" width="28" height="24" fill="#000" filter="url(#n1)" opacity=".7"/>
<!-- r9 -->
<rect x="1721" y="437" width="30" height="30" fill="#555" filter="url(#n2)"/>
<circle cx="1770" cy="452" r="14" fill="url(#rg)" filter="url(#n2)"/>
<circle cx="1804" cy="452" r="14" fill="#888" filter="url(#n2)" opacity=".6"/>
<circle cx="1838" cy="452" r="14" fill="url(#rg)" filter="url(#n1)"/>
<circle cx="1872" cy="452" r="13" fill="url(#rg)" filter="url(#n1)"/>
<!-- r10 -->
<ellipse cx="1736" cy="486" rx="13" ry="14" fill="#000" filter="url(#n1)"/>
<circle cx="1770" cy="486" r="13" fill="#999" filter="url(#n2)" opacity=".6"/>
<circle cx="1804" cy="486" r="13" fill="url(#rl)" filter="url(#n1)"/>
<path d="M1838 473l3 9 9 -2 -6 6 6 7 -9 -3 -3 9 -3 -9 -9 3 6 -7 -6 -6 9 2z" fill="#555"/>
<circle cx="1872" cy="486" r="14" fill="url(#rl)" filter="url(#n2)"/>
<!-- r11 -->
<path d="M1726 512l8 4 4 4 -4 0 -8 -5zM1738 518l6 1 2 5 -5 -1zM1742 524l6 3 -3 1z" fill="#5a9a3a"/>
<ellipse cx="1770" cy="521" rx="14" ry="9" fill="#7d6d4e"/><path d="M1757 512l5 5M1782 511l-5 6" stroke="#6e5e42" stroke-width="4"/><circle cx="1760" cy="518" r="3" fill="#111"/><circle cx="1770" cy="518" r="4" fill="#e4e0c8"/><circle cx="1770" cy="518" r="2" fill="#111"/><path d="M1772 528l8 6" stroke="#c88a3a" stroke-width="1.500"/>
<path d="M1795 512q9 -4 18 0q4 8 1 18q-1 5 -5 5h-9q-4 0 -5 -5q-3 -10 0 -18z" fill="#6ea64a"/><path d="M1802 509l2 -5 2 1 -1 4z" fill="#4a7a32"/><path d="M1796 530q8 5 17 0l-1 5h-14z" fill="#94704a"/><circle cx="1803" cy="520" r="1" fill="#333"/><circle cx="1810" cy="520" r="1" fill="#333"/>
<rect x="1720" y="130" width="170" height="374" fill="url(#pc)"/><rect x="1720" y="504" width="102" height="34" fill="url(#pc)"/>
<rect x="1744" y="154" width="8" height="8" fill="#fff"/><rect x="1778" y="154" width="8" height="8" fill="#fff"/><rect x="1812" y="154" width="8" height="8" fill="#fff"/><path fill="#6f8ff0" d="M1820 162h-7l7-7z"/>
<rect x="1778" y="256" width="8" height="8" fill="#fff"/><path fill="#ff8080" d="M1786 264h-8l8-8z"/>
</g>
<!-- sash dots -->
<g fill="#c8c8c8"><rect x="1711" y="533" width="3" height="3"/><rect x="1711" y="538" width="3" height="3"/><rect x="1711" y="544" width="3" height="3"/><rect x="1812" y="628" width="3" height="3"/><rect x="1817" y="628" width="3" height="3"/><rect x="1823" y="628" width="3" height="3"/></g>
<g fill="#c8c8c8"><rect x="190" y="536" width="3" height="3"/><rect x="190" y="541" width="3" height="3"/><rect x="190" y="546" width="3" height="3"/></g>
<!-- basic combo -->
<rect x="1718" y="546" width="199" height="22" rx="5" fill="#2a2a2a"/>
<path d="M1895 552l6.500 6.500 6.500 -6.500" fill="none" stroke="#e0e0e0" stroke-width="2"/>
<rect x="1718.500" y="571.500" width="158" height="24" rx="5" fill="#2a2a2a" stroke="#1e1e1e"/>
<path d="M1719 577q0 -5 5 -5h14v23h-14q-5 0 -5 -5z" fill="#6a6a6a"/>
<rect x="1876" y="571" width="19" height="25" fill="#4a4a4a"/><rect x="1897" y="571" width="19" height="25" fill="#4a4a4a"/>
<path d="M1879 583h14M1900 583h14M1907 576v14" stroke="#e4e4e4" stroke-width="2.400"/>
<!-- brush action row -->
<g fill="none" stroke="#e0e0e0" stroke-width="1.500">
<path d="M1726 606h9M1726 611h6M1726 617h13"/><path d="M1734 612l6 -7 2 2 -6 7z" fill="#e0e0e0"/>
<path d="M1761 608h4M1763 606v4M1766 604h6l5 5v10h-12v-9"/>
<rect x="1795.500" y="606.500" width="8" height="7"/><path d="M1806 610h2.500v8h-8v-3"/>
<path d="M1876 607a7 7 0 1 0 1 8" stroke-width="2.500"/>
</g>
<path d="M1876 602v8h-7z" fill="#e0e0e0"/>
<rect x="1828" y="603" width="16" height="16" rx="1" fill="#5f5f5f"/><path d="M1831 606l10 10M1841 606l-10 10" stroke="#3c3c3c" stroke-width="2.500"/>
<path d="M1895 618v-7l4 0v-7h7l5 5v2h2v7zM1895 612h16" fill="none" stroke="#5a5a5a" stroke-width="2"/>
<rect x="1716" y="626" width="200" height="1" fill="#2a2a2a"/>
<!-- layer tabs -->
<path d="M1760.500 666V634h33v32M1798.500 666V634h33v32" fill="none" stroke="#2e2e2e"/>
<rect x="1722" y="634" width="33" height="28" fill="#1e1e1e"/><rect x="1722" y="662" width="33" height="4" fill="#5a5a5a"/>
<rect x="1716" y="666" width="200" height="1" fill="#2a2a2a"/>
<g fill="#eee"><path d="M1734 642h13l-2 3h-14zM1734 647h13l-2 4h-14zM1734 653h13l-2 3h-14z"/></g>
<rect x="1769.500" y="642.500" width="15" height="15" fill="none" stroke="#ccc"/><path d="M1773 645v10M1777 645v10M1781 645v10" stroke="#aaa" stroke-width="2"/>
<path d="M1807 645l3 2h10l3 -2v3h-16zM1808 655q2 -6 7 -6q5 0 7 6" fill="none" stroke="#ddd" stroke-width="2"/>
<rect x="1903.500" y="644.500" width="9" height="9" fill="none" stroke="#ddd"/><path d="M1911 646v6l-5 -3z" fill="#ddd"/>
<!-- mode -->
<rect x="1718.500" y="670.500" width="159" height="24" rx="5" fill="#2a2a2a" stroke="#1e1e1e"/>
<path d="M1862 680l4 4 4 -4" fill="none" stroke="#ddd" stroke-width="1.800"/>
<rect x="1880.500" y="670.500" width="37" height="24" rx="5" fill="#2a2a2a" stroke="#1e1e1e"/>
<path d="M1903 680l4 4 4 -4" fill="none" stroke="#ddd" stroke-width="1.800"/>
<path d="M1886 678l-1 5M1886 677l4 1q5 1 4 6q-1 3 -4 3" fill="none" stroke="#ddd" stroke-width="1.800"/><circle cx="1888" cy="688" r="2" fill="#ddd"/>
<rect x="1718.500" y="698.500" width="158" height="24" rx="5" fill="#6a6a6a" stroke="#1e1e1e"/>
<rect x="1876" y="698" width="19" height="25" fill="#4a4a4a"/><rect x="1897" y="698" width="19" height="25" fill="#4a4a4a"/>
<path d="M1879 710h14" stroke="#e4e4e4" stroke-width="2.400"/><path d="M1900 710h14M1907 703v14" stroke="#5f5f5f" stroke-width="2.400"/>
<!-- layers panel -->
<rect x="1718" y="725" width="198" height="276" fill="#262626" stroke="#1e1e1e"/>
<rect x="1719" y="727" width="197" height="36" fill="#3c3c3c"/>
<rect x="1719" y="763" width="197" height="24" fill="#3c3c3c"/>
<rect x="1719" y="763" width="197" height="1" fill="#303030"/>
<path d="M1748.500 727v36M1778.500 727v36M1808.500 727v36" stroke="#303030" stroke-width="2"/>
<g fill="none" stroke="#e0e0e0" stroke-width="1.500"><path d="M1727 745q7 -7 15 0q-8 7 -15 0zM1727 775q7 -7 15 0q-8 7 -15 0z"/></g>
<circle cx="1734.500" cy="745" r="2.500" fill="#e0e0e0"/><circle cx="1734.500" cy="775" r="2.500" fill="#e0e0e0"/>
<rect x="1758" y="745" width="12" height="9" fill="#e0e0e0"/><path d="M1760.500 745v-3a3.500 3.500 0 0 1 7 0v3" fill="none" stroke="#e0e0e0" stroke-width="2"/>
<text x="1787" y="751" font-size="14" font-weight="700" font-style="italic" fill="#ddd" font-family="Liberation Serif">f</text><text x="1793" y="751" font-size="11" font-weight="700" fill="#ddd" font-family="Liberation Sans">x</text>
<rect x="1829.500" y="766.500" width="36" height="19" fill="#fff"/>
<g transform="translate(1831 768)"><g transform="scale(.0301) translate(-400 -272)"><use href="#wm"/></g></g>
<!-- layer bottom icons -->
<g fill="none" stroke="#e0e0e0" stroke-width="1.500">
<path d="M1722 1011h5M1724.500 1009v5M1729 1009h5l4 4v11h-13v-8"/>
<rect x="1825.500" y="1011.500" width="8" height="7"/><path d="M1836 1015h2.500v8h-8v-3"/>
</g>
<path d="M1748 1011h5l2 2h9v12h-16z" fill="#ddd"/><path d="M1757 1019h6M1760 1016v6" stroke="#333" stroke-width="1.600"/>
<path d="M1775 1022l6 -6 6 6M1800 1016l6 6 6 -6" fill="none" stroke="#5f5f5f" stroke-width="2.200"/>
<g fill="#ddd"><path d="M1849 1013h9l-1 2h-9zM1849 1017h9l-1 2h-9zM1849 1021h9l-1 2h-9z"/><path d="M1860 1011h2v9h2l-3 4 -3 -4h2z"/>
<path d="M1877 1010h10l-1 8q-4 2 -8 0zM1874 1024l4 -5q4 2 8 0l3 -1v6z"/></g>
<circle cx="1880" cy="1014" r=".8" fill="#333"/><circle cx="1884" cy="1014" r=".8" fill="#333"/>
<rect x="1898" y="1009" width="16" height="16" rx="1" fill="#ddd"/><path d="M1901 1012l10 10M1911 1012l-10 10" stroke="#333" stroke-width="2.600"/>
</svg>

<!-- ruler labels -->
<div class="b" style="left:213px;top:82px;width:1483px;height:18px;overflow:hidden">
<span class="rh" style="top:2px;left:-14px">-1000</span><span class="rh" style="top:2px;left:85px">-500</span><span class="rh" style="top:2px;left:188px">0</span><span class="rh" style="top:2px;left:289px">500</span><span class="rh" style="top:2px;left:390px">1000</span><span class="rh" style="top:2px;left:492px">1500</span><span class="rh" style="top:2px;left:593px">2000</span><span class="rh" style="top:2px;left:695px">2500</span><span class="rh" style="top:2px;left:797px">3000</span><span class="rh" style="top:2px;left:898px">3500</span><span class="rh" style="top:2px;left:1000px">4000</span><span class="rh" style="top:2px;left:1101px">4500</span><span class="rh" style="top:2px;left:1203px">5000</span><span class="rh" style="top:2px;left:1304px">5500</span><span class="rh" style="top:2px;left:1406px">6000</span>
</div>
<div class="b" style="left:0;top:100px;width:213px;height:881px;overflow:hidden">
<div class="rv" style="top:-1px">0<br>0</div>
<div class="rv" style="top:71px">-<br>5<br>0<br>0</div>
<div class="rv" style="top:174px">0</div>
<div class="rv" style="top:277px">5<br>0<br>0</div>
<div class="rv" style="top:378px">1<br>0<br>0<br>0</div>
<div class="rv" style="top:479px">1<br>5<br>0<br>0</div>
<div class="rv" style="top:581px">2<br>0<br>0<br>0</div>
<div class="rv" style="top:682px">2<br>5<br>0<br>0</div>
<div class="rv" style="top:784px">3<br>0<br>0<br>0</div>
</div>

<!-- text -->
<div class="t" style="left:24px;top:3px;color:#e6e6e6;letter-spacing:-.035px">[atmosphere-land-summer-terrain-aerial-view-map-1262215-pxhere.com] (imported)-4.0 (RGB color 8-bit non-linear integer, GIMP built-in sRGB, 1 layer) 5400x2700 – GIMP</div>
<div class="t" style="left:8px;top:28px">File</div>
<div class="t" style="left:42px;top:28px">Edit</div>
<div class="t" style="left:78px;top:28px">Select</div>
<div class="t" style="left:125px;top:28px">View</div>
<div class="t" style="left:166px;top:28px">Image</div>
<div class="t" style="left:214px;top:28px">Layer</div>
<div class="t" style="left:258px;top:28px">Colors</div>
<div class="t" style="left:307px;top:28px">Tools</div>
<div class="t" style="left:350px;top:28px">Filters</div>
<div class="t" style="left:397px;top:28px">Windows</div>
<div class="t" style="left:462px;top:28px">Help</div>
<div class="t" style="left:2px;top:318px;font-weight:700;font-size:11.500px">Move</div>
<div class="t" style="left:2px;top:340px;color:#c8c8c8">Move:</div>
<div class="t" style="left:2px;top:367px;font-weight:700;font-size:11.500px">Move selection</div>
<div class="t" style="left:207px;top:1007px">2279, -841</div>
<div class="t" style="left:286px;top:1007px">px</div>
<div class="t" style="left:347px;top:1007px;font-size:11.500px">20.3 %</div>
<div class="t" style="left:426px;top:1007px;color:#cfcfcf">atmosphere-land-summer-terrain-aerial-view-map-1262215-pxhere.com.jpg (135.9 MB)</div>
<div class="t" style="left:1727px;top:88px;font-style:italic;color:#8a8a8a">filter</div>
<div class="t" style="left:1718px;top:110px;font-style:italic;color:#c8d0d8">2. Hardness 050 (51 × 51)</div>
<div class="t" style="left:1728px;top:548px">Basic,</div>
<div class="t" style="left:1726px;top:574px;color:#c8c8c8">Spacing</div>
<div class="t" style="left:1847px;top:574px">10.0</div>
<div class="t" style="left:1723px;top:674px">Mode</div>
<div class="t" style="left:1814px;top:674px">Normal</div>
<div class="t" style="left:1726px;top:701px;color:#d4d4d4">Opacity</div>
<div class="t" style="left:1840px;top:701px">100.0</div>
<div class="t" style="left:1867px;top:767px;font-weight:700;color:#eee;width:49px;overflow:hidden">atmosphere</div>
</body></html>
